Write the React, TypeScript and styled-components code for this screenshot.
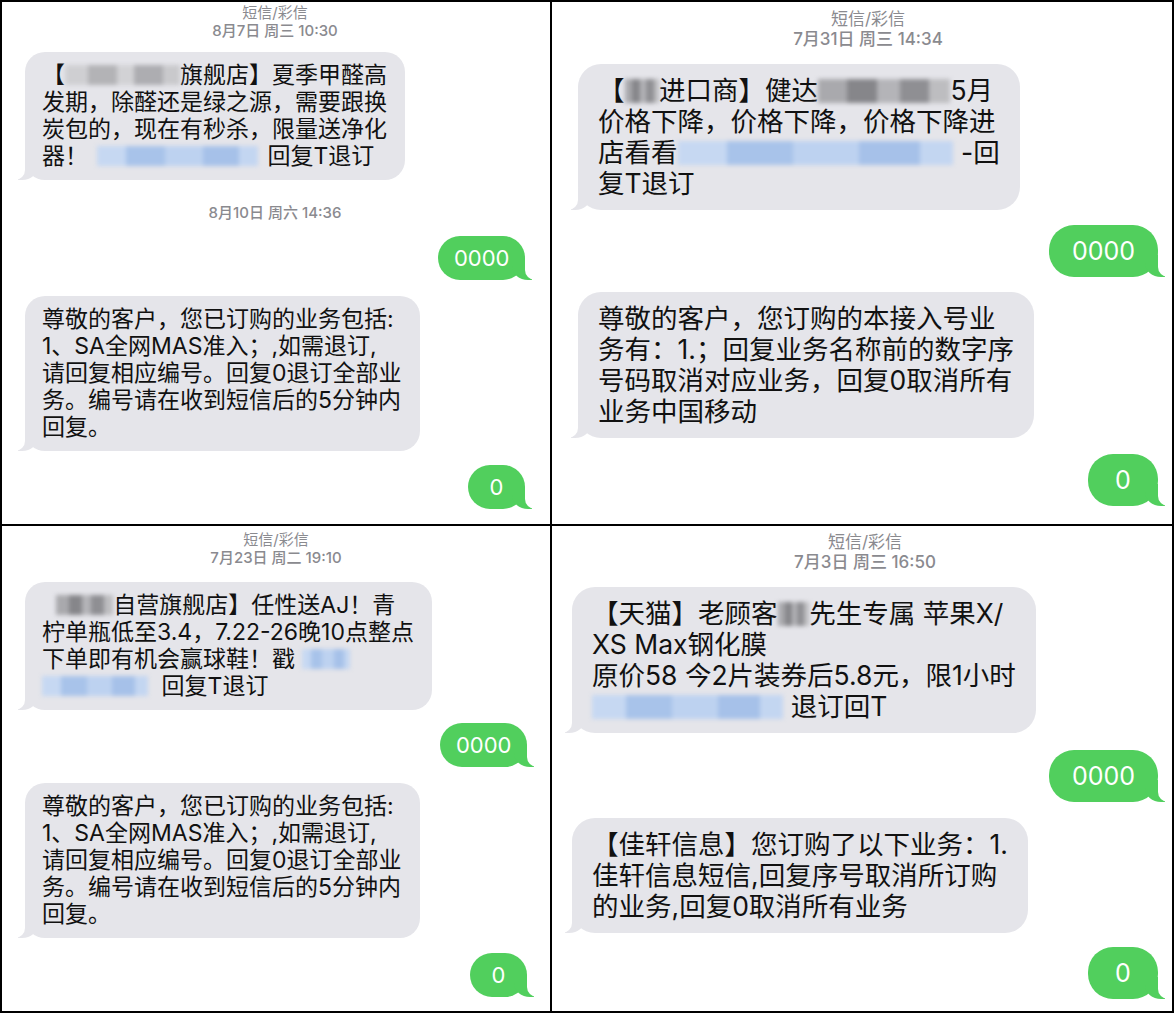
import React from "react";
import styled, { createGlobalStyle } from "styled-components";

type Size = "sm" | "lg";

// two screenshot scales: the left column is a bit smaller than the right
const M = {
  sm: { fs: 23, lh: 27, padY: 10, padL: 17, padR: 18, r: 20, head: 15, headLh: 18, gfs: 22, gPadY: 8.5, gPadX: 15.5, gMin: 57 },
  lg: { fs: 26.5, lh: 31, padY: 11, padL: 20, padR: 20, r: 23, head: 17, headLh: 20, gfs: 25, gPadY: 10.5, gPadX: 23, gMin: 70 },
};

const GlobalStyle = createGlobalStyle`
  html, body {
    margin: 0;
    padding: 0;
    background: #fff;
  }
  body {
    font-family: "Inter", "Noto Sans CJK SC", sans-serif;
  }
`;

const Sheet = styled.div`
  display: grid;
  grid-template-columns: 548px 620px;
  grid-template-rows: 522px 485px;
  gap: 2px;
  width: 1174px;
  box-sizing: border-box;
  padding: 2px;
  background: #000;
`;

const Panel = styled.section<{ $pad: string }>`
  display: flex;
  flex-direction: column;
  padding: ${(p) => p.$pad};
  background: #fff;
  overflow: hidden;
`;

const Meta = styled.div<{ $s: Size; $mt?: number }>`
  display: flex;
  flex-direction: column;
  align-items: center;
  margin-top: ${(p) => p.$mt ?? 0}px;
  font-size: ${(p) => M[p.$s].head}px;
  line-height: ${(p) => M[p.$s].headLh}px;
  color: #8a8a8f;
  white-space: nowrap;
`;

const Kind = styled.span`
  font-weight: 400;
`;

const Stamp = styled.span`
  font-weight: 500;
`;

const Received = styled.div<{ $s: Size; $mt: number }>`
  position: relative;
  z-index: 0;
  align-self: flex-start;
  margin-top: ${(p) => p.$mt}px;
  padding: ${(p) => `${M[p.$s].padY}px ${M[p.$s].padR}px ${M[p.$s].padY}px ${M[p.$s].padL}px`};
  background: #e5e5ea;
  border-radius: ${(p) => M[p.$s].r}px;
  font-size: ${(p) => M[p.$s].fs}px;
  line-height: ${(p) => M[p.$s].lh}px;
  color: #111;
  white-space: nowrap;

  &::before {
    content: "";
    position: absolute;
    z-index: -1;
    bottom: 0;
    left: -7px;
    width: 20px;
    height: 22px;
    background: #e5e5ea;
    border-bottom-right-radius: 16px 14px;
  }
  &::after {
    content: "";
    position: absolute;
    z-index: -1;
    bottom: 0;
    left: -26px;
    width: 26px;
    height: 22px;
    background: #fff;
    border-bottom-right-radius: 10px;
  }
`;

const Sent = styled.div<{ $s: Size; $mt: number }>`
  position: relative;
  z-index: 0;
  align-self: flex-end;
  margin-top: ${(p) => p.$mt}px;
  min-width: ${(p) => M[p.$s].gMin}px;
  box-sizing: border-box;
  padding: ${(p) => `${M[p.$s].gPadY}px ${M[p.$s].gPadX}px`};
  background: #51cf5d;
  border-radius: ${(p) => M[p.$s].r + 2}px;
  font-size: ${(p) => M[p.$s].gfs}px;
  line-height: ${(p) => M[p.$s].lh}px;
  text-align: center;
  color: #fff;

  &::before {
    content: "";
    position: absolute;
    z-index: -1;
    bottom: 0;
    right: -7px;
    width: 20px;
    height: 22px;
    background: #51cf5d;
    border-bottom-left-radius: 16px 14px;
  }
  &::after {
    content: "";
    position: absolute;
    z-index: -1;
    bottom: 0;
    right: -26px;
    width: 26px;
    height: 22px;
    background: #fff;
    border-bottom-left-radius: 10px;
  }
`;

// pixelated / blurred parts of the original screenshots
const Redact = styled.span<{ $w: number; $tone: "gray" | "dark" | "blue"; $ml?: number; $mr?: number }>`
  display: inline-block;
  width: ${(p) => p.$w}em;
  height: 0.9em;
  margin: 0 ${(p) => p.$mr ?? 0}em 0 ${(p) => p.$ml ?? 0}em;
  vertical-align: -0.1em;
  filter: blur(2px);
  background: ${(p) =>
    p.$tone === "blue"
      ? "linear-gradient(90deg, #c6d8f2 0 18%, #a8c3ea 18% 42%, #bdd2f0 42% 66%, #a6c1e9 66% 88%, #c3d6f1 88%)"
      : p.$tone === "dark"
      ? "linear-gradient(90deg, #a9a9ad 0 22%, #86868a 22% 45%, #b4b4b8 45% 62%, #8f8f93 62% 84%, #bdbdc0 84%)"
      : "linear-gradient(90deg, #cfcfd2 0 20%, #b3b3b6 20% 45%, #d2d2d5 45% 60%, #adadb1 60% 85%, #c9c9cc 85%)"};
`;

const subscribedText = (
  <>
    尊敬的客户，您已订购的业务包括:
    <br />
    1、SA全网MAS准入；,如需退订,
    <br />
    请回复相应编号。回复0退订全部业
    <br />
    务。编号请在收到短信后的5分钟内
    <br />
    回复。
  </>
);

const App: React.FC = () => {
  return (
    <>
      <GlobalStyle />
      <Sheet>
        <Panel $pad="2px 25px 0 23px">
          <Meta $s="sm">
            <Kind>短信/彩信</Kind>
            <Stamp>8月7日 周三 10:30</Stamp>
          </Meta>
          <Received $s="sm" $mt={12}>
            【<Redact $tone="gray" $w={5} />旗舰店】夏季甲醛高
            <br />
            发期，除醛还是绿之源，需要跟换
            <br />
            炭包的，现在有秒杀，限量送净化
            <br />
            器！
            <Redact $tone="blue" $w={7} $ml={0.4} $mr={0.4} />
            回复T退订
          </Received>
          <Meta $s="sm" $mt={24}>
            <Stamp>8月10日 周六 14:36</Stamp>
          </Meta>
          <Sent $s="sm" $mt={14}>0000</Sent>
          <Received $s="sm" $mt={16}>
            {subscribedText}
          </Received>
          <Sent $s="sm" $mt={14}>0</Sent>
        </Panel>

        <Panel $pad="7px 14px 0 26px">
          <Meta $s="lg">
            <Kind>短信/彩信</Kind>
            <Stamp>7月31日 周三 14:34</Stamp>
          </Meta>
          <Received $s="lg" $mt={15}>
            【<Redact $tone="dark" $w={1.3} />进口商】健达
            <Redact $tone="dark" $w={5} />
            5月
            <br />
            价格下降，价格下降，价格下降进
            <br />
            店看看
            <Redact $tone="blue" $w={10.4} $mr={0.3} />
            -回
            <br />
            复T退订
          </Received>
          <Sent $s="lg" $mt={15}>0000</Sent>
          <Received $s="lg" $mt={15}>
            尊敬的客户，您订购的本接入号业
            <br />
            务有：1.；回复业务名称前的数字序
            <br />
            号码取消对应业务，回复0取消所有
            <br />
            业务中国移动
          </Received>
          <Sent $s="lg" $mt={16}>0</Sent>
        </Panel>

        <Panel $pad="5px 23px 0 23px">
          <Meta $s="sm">
            <Kind>短信/彩信</Kind>
            <Stamp>7月23日 周二 19:10</Stamp>
          </Meta>
          <Received $s="sm" $mt={15}>
            <Redact $tone="dark" $w={2.5} $ml={0.6} />
            自营旗舰店】任性送AJ！青
            <br />
            柠单瓶低至3.4，7.22-26晚10点整点
            <br />
            下单即有机会赢球鞋！戳
            <Redact $tone="blue" $w={2.1} $ml={0.3} />
            <br />
            <Redact $tone="blue" $w={4.6} $mr={0.6} />
            回复T退订
          </Received>
          <Sent $s="sm" $mt={13}>0000</Sent>
          <Received $s="sm" $mt={16}>
            {subscribedText}
          </Received>
          <Sent $s="sm" $mt={15}>0</Sent>
        </Panel>

        <Panel $pad="6px 14px 0 20px">
          <Meta $s="lg">
            <Kind>短信/彩信</Kind>
            <Stamp>7月3日 周三 16:50</Stamp>
          </Meta>
          <Received $s="lg" $mt={15}>
            【天猫】老顾客
            <Redact $tone="dark" $w={1.2} />
            先生专属 苹果X/
            <br />
            XS Max钢化膜
            <br />
            原价58 今2片装券后5.8元，限1小时
            <br />
            <Redact $tone="blue" $w={7.2} $mr={0.3} />
            退订回T
          </Received>
          <Sent $s="lg" $mt={17}>0000</Sent>
          <Received $s="lg" $mt={16}>
            【佳轩信息】您订购了以下业务：1.
            <br />
            佳轩信息短信,回复序号取消所订购
            <br />
            的业务,回复0取消所有业务
          </Received>
          <Sent $s="lg" $mt={14}>0</Sent>
        </Panel>
      </Sheet>
    </>
  );
};

export default App;
